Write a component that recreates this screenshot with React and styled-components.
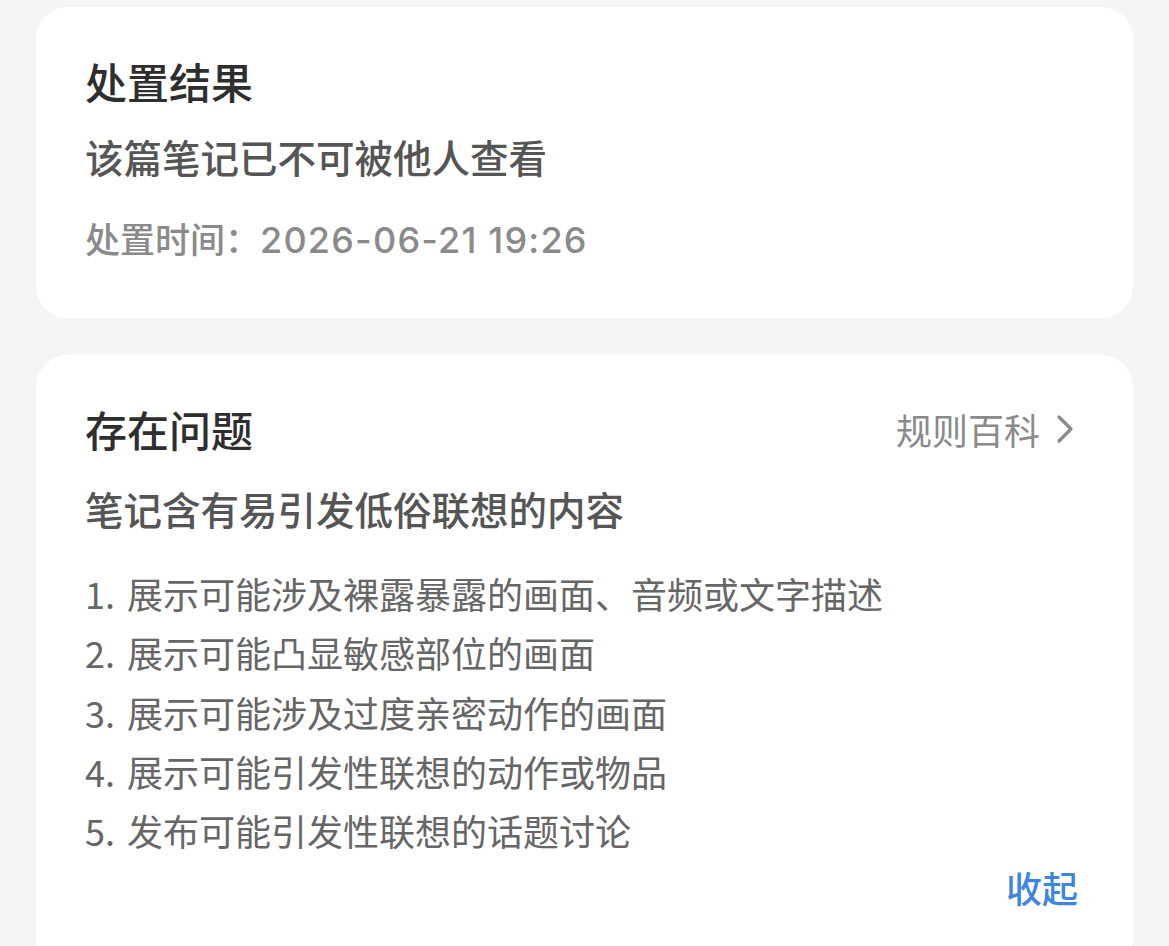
import React from "react";
import styled, { createGlobalStyle } from "styled-components";

const GlobalStyle = createGlobalStyle`
  html, body {
    margin: 0;
    padding: 0;
    background: #f5f5f5;
  }
  body {
    font-family: "Noto Sans CJK SC", "Noto Sans", sans-serif;
    -webkit-font-smoothing: antialiased;
  }
`;

const Page = styled.div`
  display: flex;
  flex-direction: column;
  gap: 37px;
  padding: 7px 36px 0;
  min-height: 946px;
  box-sizing: border-box;
  background: #f5f5f5;
`;

const Card = styled.section`
  background: #ffffff;
  border-radius: 32px;
  padding: ${(p) => p.$padding};
  display: flex;
  flex-direction: column;
`;

const HeaderRow = styled.div`
  display: flex;
  align-items: center;
  justify-content: space-between;
`;

const Title = styled.h2`
  margin: 0;
  font-size: 42px;
  line-height: 56px;
  font-weight: 500;
  color: #2e2e2e;
`;

const RuleLink = styled.a`
  display: flex;
  align-items: center;
  gap: 15px;
  padding-right: 3px;
  font-size: 36px;
  line-height: 56px;
  color: #8a8a8a;
  text-decoration: none;
  svg {
    display: block;
  }
`;

const Subtitle = styled.p`
  margin: ${(p) => p.$margin};
  font-size: 38.5px;
  line-height: 52px;
  font-weight: 500;
  color: #555555;
`;

const Meta = styled.p`
  margin: 31px 0 0;
  height: 50px;
  font-size: 35px;
  line-height: 50px;
  font-weight: 500;
  color: #8a8a8a;
`;

const Digits = styled.span`
  font-family: Inter, "Noto Sans", sans-serif;
  font-size: 36px;
  line-height: 1;
  letter-spacing: 1.2px;
`;

const List = styled.ol`
  list-style: none;
  margin: 30px 0 0;
  padding: 0;
`;

const Item = styled.li`
  display: flex;
  font-size: 36px;
  line-height: 59.25px;
  color: #666666;
`;

const Num = styled.span`
  width: 42px;
  flex: none;
`;

const Footer = styled.div`
  display: flex;
  justify-content: flex-end;
  margin-top: 2px;
`;

const Collapse = styled.button`
  border: none;
  background: none;
  padding: 0;
  font-family: inherit;
  font-size: 36px;
  line-height: 50px;
  font-weight: 500;
  color: #3d85e0;
  cursor: pointer;
`;

const Chevron = () => (
  <svg width="20" height="32" viewBox="0 0 20 32" fill="none">
    <path d="M4 4 L16 16 L4 28" stroke="#8a8a8a" strokeWidth="3.2" strokeLinecap="round" strokeLinejoin="round" />
  </svg>
);

const items = [
  "展示可能涉及裸露暴露的画面、音频或文字描述",
  "展示可能凸显敏感部位的画面",
  "展示可能涉及过度亲密动作的画面",
  "展示可能引发性联想的动作或物品",
  "发布可能引发性联想的话题讨论",
];

export default function App() {
  return (
    <>
      <GlobalStyle />
      <Page>
        <Card $padding="46px 49px 55px">
          <Title>处置结果</Title>
          <Subtitle $margin="21px 0 0">该篇笔记已不可被他人查看</Subtitle>
          <Meta>
            处置时间：<Digits>2026-06-21 19:26</Digits>
          </Meta>
        </Card>
        <Card $padding="46px 55px 60px 49px">
          <HeaderRow>
            <Title>存在问题</Title>
            <RuleLink href="#">
              规则百科
              <Chevron />
            </RuleLink>
          </HeaderRow>
          <Subtitle $margin="25px 0 0">笔记含有易引发低俗联想的内容</Subtitle>
          <List>
            {items.map((t, i) => (
              <Item key={i}>
                <Num>{i + 1}.</Num>
                {t}
              </Item>
            ))}
          </List>
          <Footer>
            <Collapse>收起</Collapse>
          </Footer>
        </Card>
      </Page>
    </>
  );
}
